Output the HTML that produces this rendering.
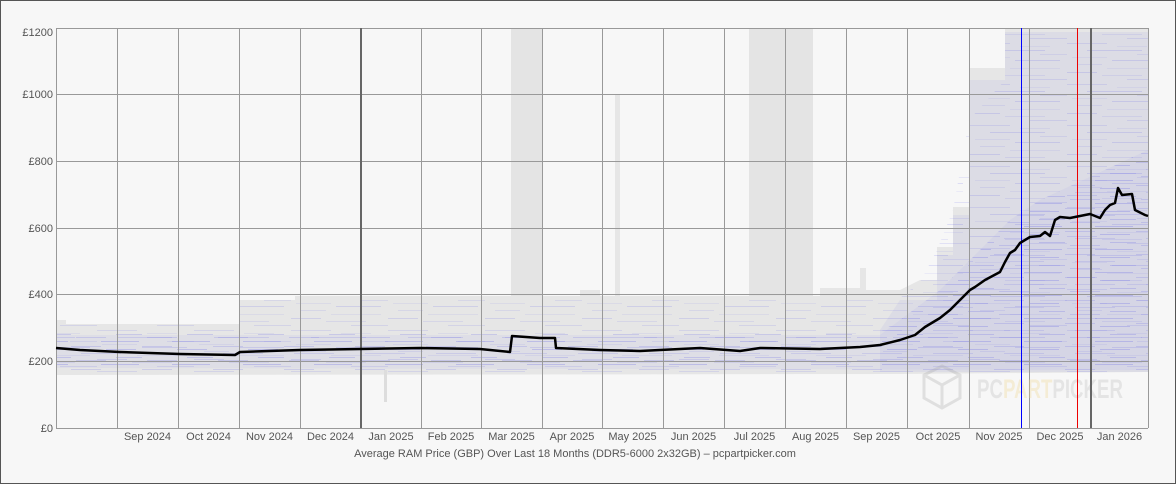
<!DOCTYPE html><html><head><meta charset="utf-8"><style>
html,body{margin:0;padding:0}
body{width:1176px;height:484px;background:#f7f7f7;font-family:"Liberation Sans",sans-serif;overflow:hidden}
#w{position:absolute;left:0;top:0;width:1174px;height:482px;border:1px solid #555;background:#f7f7f7}
</style></head><body><div id="w"></div>
<svg width="1176" height="484" style="position:absolute;left:0;top:0" font-family="Liberation Sans, sans-serif" font-size="11">
<defs>
<pattern id="p1" patternUnits="userSpaceOnUse" width="97" height="41">
<rect x="0" y="2" width="40" height="1" fill="#5a5ae6" fill-opacity="0.25"/>
<rect x="50" y="5" width="30" height="1" fill="#5a5ae6" fill-opacity="0.15"/>
<rect x="20" y="9" width="55" height="1" fill="#5a5ae6" fill-opacity="0.3"/>
<rect x="70" y="13" width="27" height="1" fill="#5a5ae6" fill-opacity="0.2"/>
<rect x="5" y="16" width="35" height="1" fill="#5a5ae6" fill-opacity="0.15"/>
<rect x="45" y="19" width="45" height="1" fill="#5a5ae6" fill-opacity="0.3"/>
<rect x="10" y="23" width="25" height="1" fill="#5a5ae6" fill-opacity="0.2"/>
<rect x="40" y="27" width="50" height="1" fill="#5a5ae6" fill-opacity="0.15"/>
<rect x="0" y="31" width="30" height="1" fill="#5a5ae6" fill-opacity="0.3"/>
<rect x="35" y="34" width="40" height="1" fill="#5a5ae6" fill-opacity="0.2"/>
<rect x="60" y="38" width="37" height="1" fill="#5a5ae6" fill-opacity="0.25"/>
</pattern>
<pattern id="p2" patternUnits="userSpaceOnUse" width="71" height="23">
<rect x="0" y="1" width="30" height="1" fill="#4a4ae6" fill-opacity="0.3"/>
<rect x="35" y="4" width="30" height="1" fill="#4a4ae6" fill-opacity="0.4"/>
<rect x="10" y="8" width="40" height="1" fill="#4a4ae6" fill-opacity="0.25"/>
<rect x="45" y="12" width="26" height="1" fill="#4a4ae6" fill-opacity="0.35"/>
<rect x="5" y="15" width="30" height="1" fill="#4a4ae6" fill-opacity="0.3"/>
<rect x="30" y="19" width="38" height="1" fill="#4a4ae6" fill-opacity="0.4"/>
</pattern>
</defs>
<rect x="511" y="28" width="31" height="300" fill="#e4e4e4"/>
<rect x="749" y="28" width="64" height="300" fill="#e4e4e4"/>
<rect x="615" y="94" width="5" height="220" fill="#e6e6e6"/>
<polygon fill="#e6e6e6" points="56,320 66,320 66,324 239,324 239,300 295,300 295,296 580,296 580,290 600,290 600,296 820,296 820,288 860,288 860,268 866,268 866,290 900,290 920,280 937,280 937,247 953,247 953,207 969,207 969,68 1005,68 1005,28 1148,28 1148,372 900,374 56,375"/>
<rect x="384" y="370" width="3" height="32" fill="#ddd"/>
<polygon fill="#6464e6" fill-opacity="0.07" points="880,330 900,300 937,300 937,255 953,255 953,215 969,215 969,80 1005,80 1005,32 1148,32 1148,372 880,372"/>
<polygon fill="#6464e6" fill-opacity="0.06" points="56,335 880,335 900,320 940,290 980,250 1010,220 1040,200 1148,150 1148,370 56,368"/>
<g opacity="0.55">
<polygon fill="url(#p1)" points="56,325 239,325 239,300 900,298 920,282 937,250 953,210 969,120 1005,80 1005,34 1148,34 1148,372 56,374"/>
<polygon fill="url(#p2)" points="56,332 880,332 900,320 940,290 980,250 1010,220 1040,200 1148,150 1148,372 56,370"/>
</g>
<g stroke="#999" stroke-width="1">
<path d="M56 28.5H1148M56 94.5H1148M56 161.5H1148M56 228.5H1148M56 294.5H1148M56 361.5H1148M56 428.5H1148"/>
<path d="M56.5 28V428M117.5 28V428M178.5 28V428M239.5 28V428M300.5 28V428M421.5 28V428M481.5 28V428M542.5 28V428M602.5 28V428M663.5 28V428M724.5 28V428M785.5 28V428M846.5 28V428M907.5 28V428M969.5 28V428M1029.5 28V428M1148.5 28V428"/>
</g>
<g opacity="0.3">
<path d="M942 366 L960 375 L960 398 L942 408 L924 398 L924 375 Z M924 375 L942 385 L960 375 M942 385 L942 408" fill="none" stroke="#aaa" stroke-width="3"/>
<text x="977" y="398" font-size="27" font-weight="bold" fill="#bbb" textLength="146" lengthAdjust="spacingAndGlyphs">PC<tspan fill="#eed68a">PART</tspan>PICKER</text>
</g>
<line x1="1021.5" y1="28" x2="1021.5" y2="428" stroke="#00f"/>
<line x1="1077.5" y1="28" x2="1077.5" y2="428" stroke="#e00"/>
<line x1="361" y1="28" x2="361" y2="428" stroke="#666" stroke-width="2"/>
<line x1="1091" y1="28" x2="1091" y2="428" stroke="#666" stroke-width="2"/>
<polyline fill="none" stroke="#000" stroke-width="2.5" stroke-linejoin="round" points="56,348 80,350 120,352 180,354 235,355 240,352 300,350 360,349 420,348 480,349 510,352 512,336 540,338 555,338 556,348 600,350 640,351 700,348 740,351 760,348 820,349 860,347 880,345 900,340 915,335 925,327 940,318 950,310 960,300 970,290 975,287 985,280 1000,272 1005,262 1010,253 1015,250 1020,243 1030,237 1040,236 1045,232 1050,236 1055,220 1060,217 1070,218 1080,216 1090,214 1100,218 1105,210 1110,205 1115,203 1118,188 1122,195 1132,194 1135,210 1145,215 1148,216"/>
<g fill="#555" text-anchor="end">
<text x="53" y="36">£1200</text><text x="53" y="98">£1000</text><text x="53" y="165">£800</text><text x="53" y="232">£600</text><text x="53" y="298">£400</text><text x="53" y="365">£200</text><text x="53" y="432">£0</text>
</g>
<g fill="#555" text-anchor="middle">
<text x="147.5" y="440">Sep 2024</text><text x="208.5" y="440">Oct 2024</text><text x="269.5" y="440">Nov 2024</text><text x="330.5" y="440">Dec 2024</text><text x="391" y="440">Jan 2025</text><text x="451" y="440">Feb 2025</text><text x="511.5" y="440">Mar 2025</text><text x="572" y="440">Apr 2025</text><text x="632.5" y="440">May 2025</text><text x="693.5" y="440">Jun 2025</text><text x="754.5" y="440">Jul 2025</text><text x="815.5" y="440">Aug 2025</text><text x="876.5" y="440">Sep 2025</text><text x="938" y="440">Oct 2025</text><text x="999" y="440">Nov 2025</text><text x="1060" y="440">Dec 2025</text><text x="1119.5" y="440">Jan 2026</text>
</g>
<text x="575" y="457" text-anchor="middle" fill="#555">Average RAM Price (GBP) Over Last 18 Months (DDR5-6000 2x32GB) – pcpartpicker.com</text>
</svg>
</body></html>
